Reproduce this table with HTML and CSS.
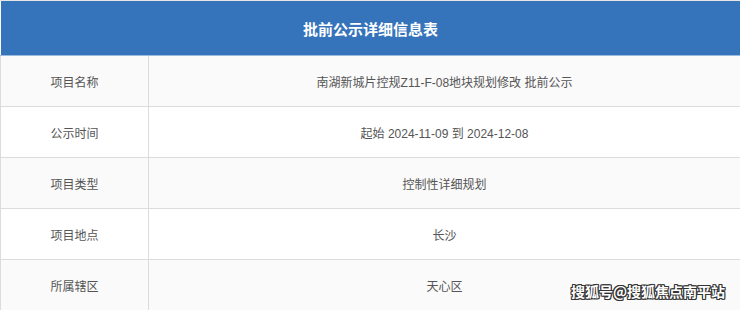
FILE: index.html
```html
<!DOCTYPE html>
<html lang="zh">
<head>
<meta charset="utf-8">
<title>批前公示详细信息表</title>
<link rel="stylesheet" href="styles.css">
</head>
<body>
<div class="page">
  <table class="info">
    <colgroup>
      <col class="col-label">
      <col class="col-value">
    </colgroup>
    <thead>
      <tr><th colspan="2">批前公示详细信息表</th></tr>
    </thead>
    <tbody>
      <tr class="odd"><td>项目名称</td><td>南湖新城片控规Z11-F-08地块规划修改 批前公示</td></tr>
      <tr><td>公示时间</td><td>起始 2024-11-09 到 2024-12-08</td></tr>
      <tr class="odd"><td>项目类型</td><td>控制性详细规划</td></tr>
      <tr><td>项目地点</td><td>长沙</td></tr>
      <tr class="odd"><td>所属辖区</td><td>天心区</td></tr>
    </tbody>
  </table>
  <div class="watermark">搜狐号@搜狐焦点南平站</div>
</div>
</body>
</html>
```
FILE: styles.css
```css
html, body {
  margin: 0;
  padding: 0;
  background: #ffffff;
}
.page {
  position: relative;
  width: 740px;
  height: 310px;
  overflow: hidden;
  border-top: 1px solid #e6e6e6;
  box-sizing: border-box;
  font-family: "Liberation Sans", Arial, "Noto Sans CJK SC", sans-serif;
}
.info {
  width: 741px;
  border-collapse: collapse;
  table-layout: fixed;
}
.col-label {
  width: 148px;
}
.info th {
  height: 54px;
  padding: 0;
  background: #3573bb;
  color: #ffffff;
  font-size: 15px;
  font-weight: bold;
  text-align: center;
  border-bottom: 1px solid #9cb9de;
}
.info td {
  height: 50px;
  padding: 0;
  border: 1px solid #dcdcdc;
  color: #555555;
  font-size: 12px;
  text-align: center;
  background: #ffffff;
}
.info tbody tr:first-child td {
  border-top: none;
}
.info tr.odd td {
  background: #fafafa;
}
.watermark {
  position: absolute;
  right: 15px;
  bottom: 9px;
  font-family: "Noto Sans CJK SC", sans-serif;
  font-size: 14px;
  font-weight: bold;
  color: #ffffff;
  text-shadow: -1px -1px 0 #333, 1px -1px 0 #333, -1px 1px 0 #333, 1px 1px 0 #333, 0 1px 0 #333, 0 -1px 0 #333, 1px 0 0 #333, -1px 0 0 #333;
}
```
